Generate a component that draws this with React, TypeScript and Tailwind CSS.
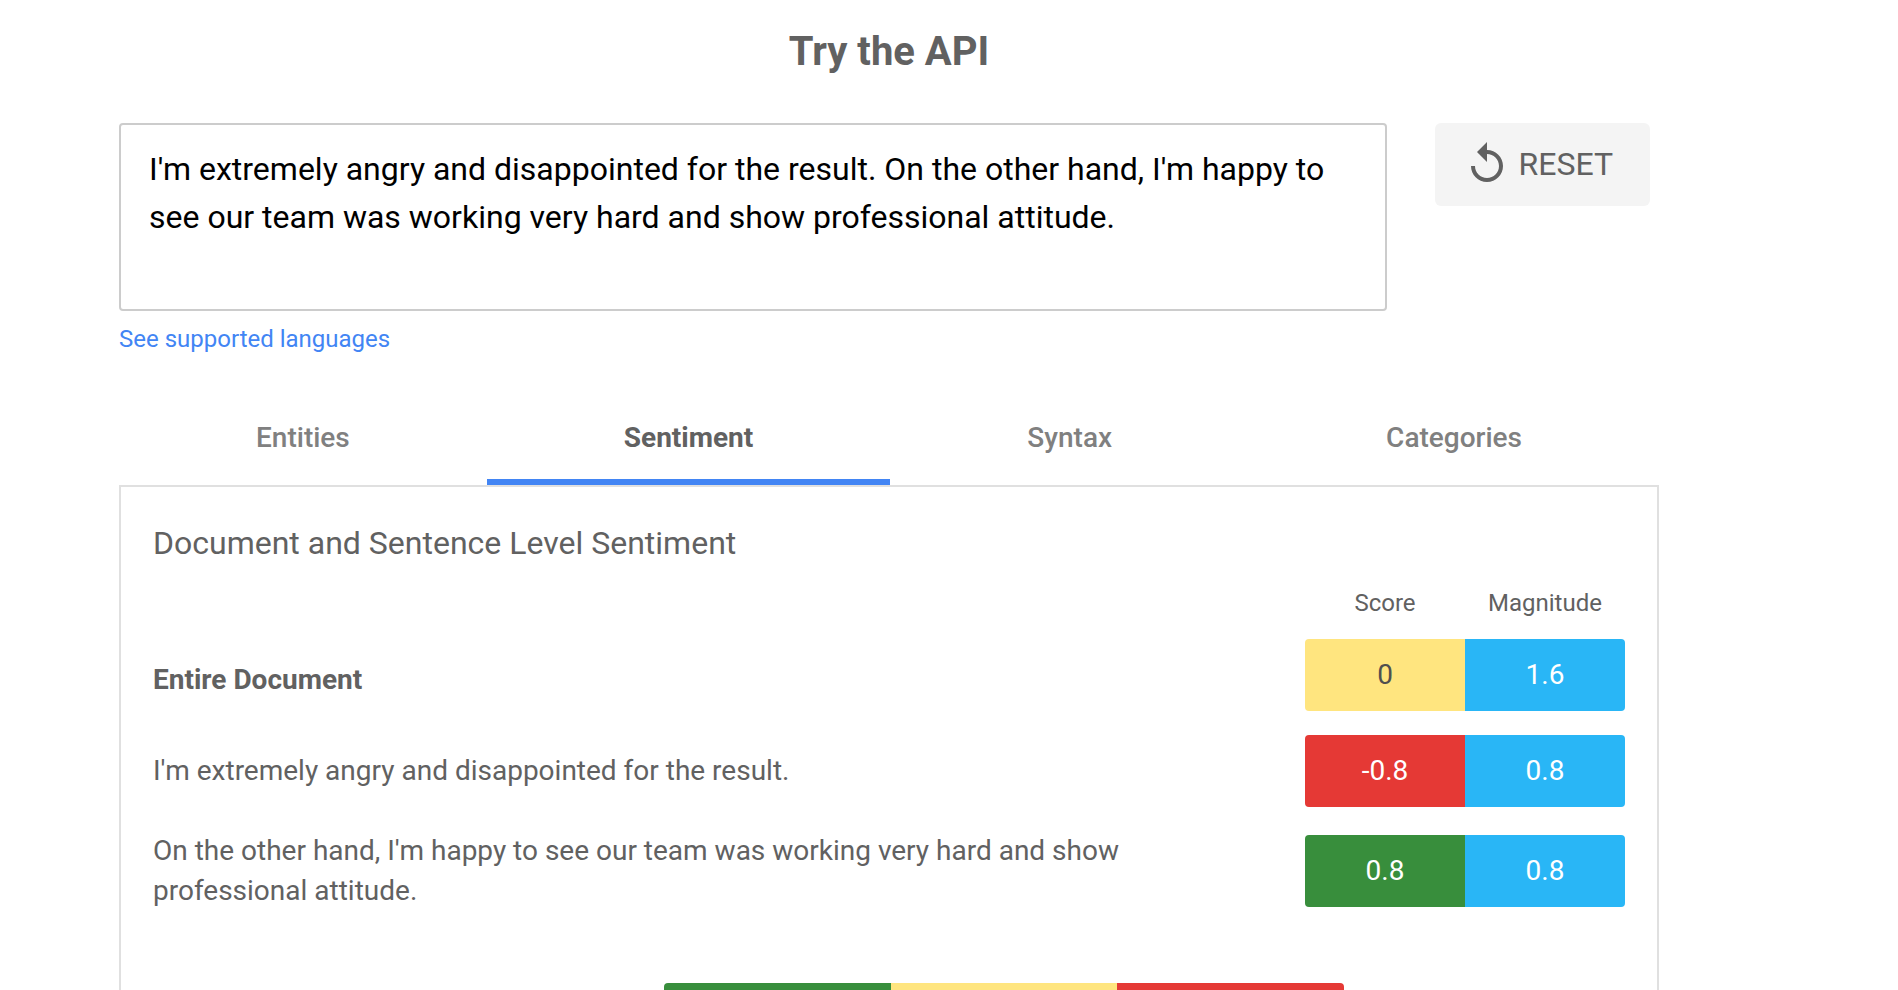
import { useState } from "react";
import { MdReplay } from "react-icons/md";

const SAMPLE_TEXT =
  "I'm extremely angry and disappointed for the result. On the other hand, I'm happy to see our team was working very hard and show professional attitude.";

const tabs = ["Entities", "Sentiment", "Syntax", "Categories"];

const rows = [
  {
    label: "Entire Document",
    score: "0",
    magnitude: "1.6",
    labelClass: "pt-[22px] font-bold",
    scoreClass: "bg-[#ffe57f] text-[#4f4f4f]",
  },
  {
    label: "I'm extremely angry and disappointed for the result.",
    score: "-0.8",
    magnitude: "0.8",
    labelClass: "pt-3 font-normal",
    scoreClass: "bg-[#e53935] text-white",
  },
  {
    label: "On the other hand, I'm happy to see our team was working very hard and show professional attitude.",
    score: "0.8",
    magnitude: "0.8",
    labelClass: "pt-3 font-normal",
    scoreClass: "bg-[#388e3c] text-white",
  },
];

export default function App() {
  const [text, setText] = useState(SAMPLE_TEXT);
  const [activeTab, setActiveTab] = useState("Sentiment");

  return (
    <main className="flex h-screen flex-col overflow-hidden bg-white pt-7 pr-[239px] pl-[119px] font-[Roboto,sans-serif] text-[#616161]">
      <h1 className="text-center text-[40px] leading-[48px] font-bold">Try the API</h1>

      {/* Input */}
      <div className="mt-[47px] flex items-start gap-12 pr-[9px]">
        <textarea
          aria-label="Text to analyze"
          value={text}
          onChange={(e) => setText(e.target.value)}
          spellCheck={false}
          className="block h-[188px] min-w-0 flex-1 resize-none rounded border-2 border-[#cccccc] bg-white px-7 py-5 text-[32px] leading-[48px] text-black outline-none"
        />
        <button
          type="button"
          onClick={() => setText(SAMPLE_TEXT)}
          className="flex h-[83px] shrink-0 items-center gap-2 rounded-md bg-[#f4f4f4] pr-[37px] pb-[2px] pl-7 text-[32px] leading-[40px]"
        >
          <MdReplay size={48} />
          RESET
        </button>
      </div>
      <a href="#languages" className="mt-3 self-start text-[24px] leading-[32px] text-[#4285f4]">
        See supported languages
      </a>

      {/* Tabs */}
      <div role="tablist" className="mt-8 flex">
        {tabs.map((tab) => (
          <button
            key={tab}
            type="button"
            role="tab"
            aria-selected={tab === activeTab}
            onClick={() => setActiveTab(tab)}
            className={`flex-auto border-b-6 pt-[31px] pb-[21px] text-center text-[28px] leading-[40px] ${
              tab === activeTab
                ? "border-[#4285f4] font-bold text-[#616161]"
                : "border-transparent font-medium text-[#808080]"
            }`}
          >
            {tab}
          </button>
        ))}
      </div>

      {/* Results */}
      <section className="flex-1 border-2 border-b-0 border-[#e0e0e0] px-8 pt-9">
        <h2 className="text-[32px] leading-[40px]">Document and Sentence Level Sentiment</h2>

        <table className="w-full border-collapse text-[28px] leading-[40px]">
          <thead>
            <tr className="text-[24px] leading-[32px]">
              <td />
              <th scope="col" className="w-40 pt-6 pb-2 font-normal">Score</th>
              <th scope="col" className="w-40 pt-6 pb-2 font-normal">Magnitude</th>
            </tr>
          </thead>
          <tbody>
            {rows.map((row) => (
              <tr key={row.label}>
                <th scope="row" className={`pr-24 pb-3 text-left ${row.labelClass}`}>
                  {row.label}
                </th>
                <td className="py-3">
                  <div className={`flex h-[72px] items-center justify-center rounded-l ${row.scoreClass}`}>
                    {row.score}
                  </div>
                </td>
                <td className="py-3">
                  <div className="flex h-[72px] items-center justify-center rounded-r bg-[#29b6f6] text-white">
                    {row.magnitude}
                  </div>
                </td>
              </tr>
            ))}
          </tbody>
        </table>

        {/* Score range */}
        <div className="mt-15 mr-[281px] ml-auto grid h-10 w-[680px] grid-cols-3 overflow-hidden rounded">
          <div className="bg-[#388e3c]" />
          <div className="bg-[#ffe57f]" />
          <div className="bg-[#e53935]" />
        </div>
      </section>
    </main>
  );
}
